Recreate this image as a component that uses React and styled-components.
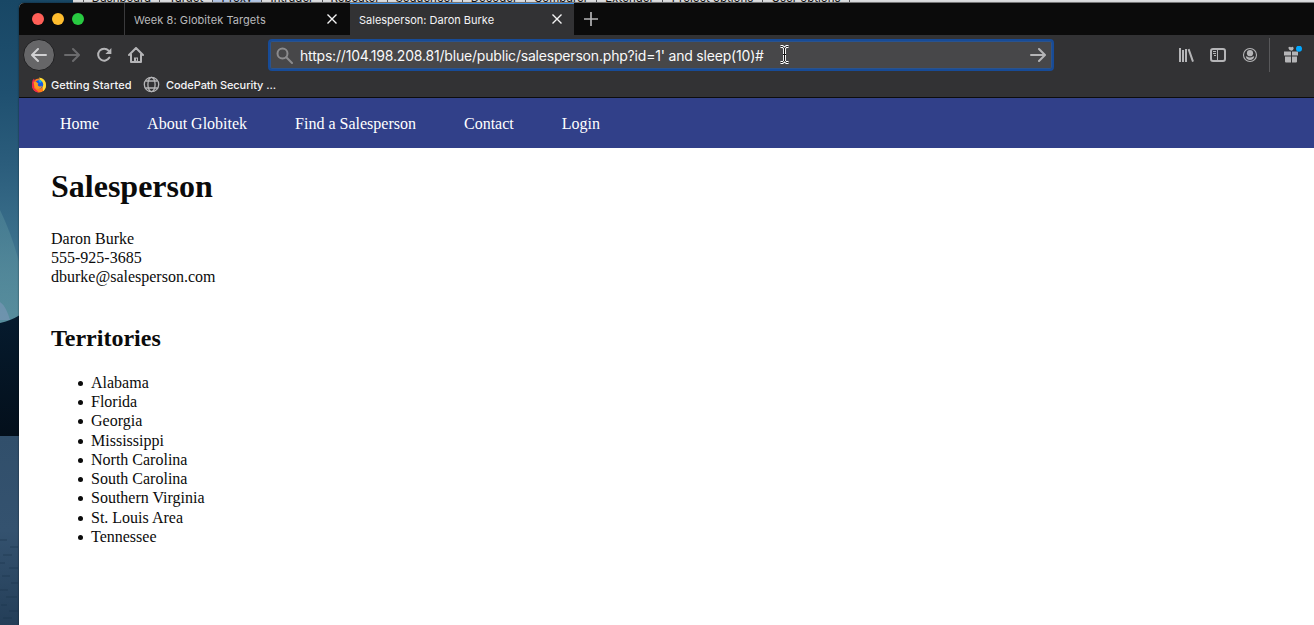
import React from 'react';
import styled, { createGlobalStyle } from 'styled-components';

const GlobalStyle = createGlobalStyle`
  * { box-sizing: border-box; }
  body { margin: 0; overflow: hidden; }
`;

const Desktop = styled.div`
  position: relative;
  width: 1314px;
  height: 625px;
  overflow: hidden;
  background: #1c4764;
  display: flex;
  flex-direction: column;
  isolation: isolate;
`;

const Wallpaper = styled.svg`
  position: absolute;
  left: 0;
  top: 0;
  z-index: -1;
`;

const BackWindow = styled.div`
  margin-left: 73px;
  height: 3px;
  flex: none;
  overflow: hidden;
  display: flex;
  padding-left: 10px;
  background: #dcdddf;
  border-bottom: 1px solid #8b8b8d;
`;

const BackTab = styled.div`
  flex: none;
  width: ${(p) => p.$width}px;
  height: 2px;
  border-left: 1px solid #55565a;
  background: ${(p) => (p.$active ? '#b3c6e4' : 'transparent')};
  color: #111;
  text-align: center;
  white-space: nowrap;
  font: 11.5px/14px Inter, 'Liberation Sans', sans-serif;

  span {
    display: block;
    margin-top: -9px;
  }
`;

const Window = styled.div`
  flex: 1;
  margin-left: 19px;
  display: flex;
  flex-direction: column;
  border-top-left-radius: 5px;
  overflow: hidden;
  background: #fff;
  box-shadow: 0 0 2px rgba(0, 0, 0, 0.6);
`;

const TabStrip = styled.div`
  flex: none;
  height: 32px;
  display: flex;
  background: #0b0b0b;
`;

const TrafficLights = styled.div`
  width: 105px;
  padding: 0 0 1px 13px;
  display: flex;
  align-items: center;
  gap: 8px;
`;

const Light = styled.span`
  width: 12px;
  height: 12px;
  border-radius: 50%;
  background: ${(p) => p.$color};
`;

const Tab = styled.div`
  width: ${(p) => p.$width}px;
  display: flex;
  align-items: center;
  justify-content: space-between;
  padding: 0 ${(p) => (p.$active ? 11 : 12)}px 0 9px;
  border-left: ${(p) => (p.$active ? 'none' : '1px solid #3a3a3c')};
  background: ${(p) => (p.$active ? '#323234' : 'transparent')};
  color: ${(p) => (p.$active ? '#f4f4f6' : '#b9b9bb')};
  box-shadow: ${(p) => (p.$active ? 'inset 0 1px #3b93ee' : 'none')};
  font: 11px/16px Inter, 'Liberation Sans', sans-serif;
  white-space: nowrap;
`;

const TabTitle = styled.span`
  letter-spacing: ${(p) => p.$track}px;
  padding-top: 1px;
`;

const Icon = styled.svg`
  flex: none;
  display: block;
  fill: none;
  stroke: ${(p) => p.$color || '#b5b5b7'};
  stroke-width: ${(p) => p.$weight || 2};
`;

const NewTab = styled.div`
  padding: 9px 10px;
`;

const Toolbar = styled.div`
  flex: none;
  height: 40px;
  display: flex;
  align-items: center;
  background: #323234;
`;

const NavButtons = styled.div`
  width: 249px;
  padding-left: 4px;
  display: flex;
  align-items: center;
`;

const BackButton = styled.div`
  width: 32px;
  height: 32px;
  margin-right: 9px;
  border-radius: 50%;
  border: 1px solid #1f1f21;
  background: #666668;
  display: grid;
  place-items: center;
`;

const NavIcon = styled.div`
  width: 16px;
  margin-right: 16px;
`;

const UrlBar = styled.div`
  width: 786px;
  height: 32px;
  padding: 0 6px 0 6px;
  display: flex;
  align-items: center;
  border: 2px solid #174b97;
  border-radius: 4px;
  background: #474749;
  box-shadow: inset 0 0 0 1px #29538e;
`;

const UrlText = styled.span`
  margin-left: 7px;
  padding-top: 1px;
  flex: 1;
  color: #f9f9fa;
  font: 14px/20px Inter, 'Liberation Sans', sans-serif;
  letter-spacing: -0.19px;
  white-space: nowrap;
`;

const TextCursor = styled.svg`
  position: absolute;
  left: 779px;
  top: 45px;
`;

const ToolIcons = styled.div`
  margin-left: auto;
  height: 34px;
  display: flex;
  align-items: center;
  gap: 16px;
`;

const Gift = styled.div`
  width: 45px;
  height: 34px;
  margin-left: -5px;
  padding: 8px 0 0 13px;
  border-left: 1px solid #58585a;
`;

const Bookmarks = styled.div`
  flex: none;
  height: 23px;
  display: flex;
  align-items: center;
  padding: 0 0 3px 12px;
  border-bottom: 1px solid #0c0c0d;
  background: #323234;
`;

const Bookmark = styled.div`
  display: flex;
  align-items: center;
  gap: ${(p) => p.$gap}px;
  width: ${(p) => p.$width}px;
  color: #f5f5f7;
  font: 500 11px/16px Inter, 'Liberation Sans', sans-serif;
  letter-spacing: ${(p) => p.$track}px;
  white-space: nowrap;
`;

const SiteNav = styled.nav`
  flex: none;
  height: 50px;
  padding: 2px 0 0 41px;
  display: flex;
  align-items: center;
  gap: 48px;
  background: #314089;
  color: #fff;
  font: 16px/18px 'Liberation Serif', serif;
`;

const Page = styled.main`
  flex: 1;
  padding: 0 32px;
  background: #fff;
  color: #0b0b0b;
  font: 16px/19.25px 'Liberation Serif', serif;
`;

const Heading = styled.h1`
  margin: 20px 0 23.5px;
  font-size: 32px;
  line-height: 37px;
`;

const Subheading = styled.h2`
  margin: 37.5px 0 21px;
  font-size: 24px;
  line-height: 28px;
`;

const Contact = styled.p`
  margin: 0;
`;

const TerritoryList = styled.ul`
  margin: 0;
  padding-left: 27px;
  list-style: none;
`;

const Territory = styled.li`
  display: flex;
  align-items: center;
  gap: 8px;

  &::before {
    content: '';
    width: 5px;
    height: 5px;
    margin-top: 2px;
    border-radius: 50%;
    background: #0b0b0b;
  }
`;

const backTabs = [
  ['Dashboard', 76],
  ['Target', 53],
  ['Proxy', 49, true],
  ['Intruder', 61],
  ['Repeater', 65],
  ['Sequencer', 75],
  ['Decoder', 63],
  ['Comparer', 71],
  ['Extender', 66],
  ['Project options', 100],
  ['User options', 87],
  ['', 2],
];

const territories = [
  'Alabama',
  'Florida',
  'Georgia',
  'Mississippi',
  'North Carolina',
  'South Carolina',
  'Southern Virginia',
  'St. Louis Area',
  'Tennessee',
];

const CloseIcon = () => (
  <Icon width="12" height="12" viewBox="0 0 12 12" $color="#f4f4f5" $weight="1.4">
    <path d="M1.5 1.5l9 9M10.5 1.5l-9 9" />
  </Icon>
);

const Landscape = () => (
  <Wallpaper width="80" height="625" viewBox="0 0 80 625">
    <defs>
      <linearGradient id="sky" x1="0" y1="0" x2="0" y2="1">
        <stop offset="0" stopColor="#184765" />
        <stop offset="0.28" stopColor="#1f5070" />
        <stop offset="0.5" stopColor="#2b5d7c" />
        <stop offset="0.72" stopColor="#3a6f8b" />
        <stop offset="1" stopColor="#5d93a4" />
      </linearGradient>
      <linearGradient id="glow" x1="0" y1="0" x2="0" y2="1">
        <stop offset="0" stopColor="#568c9b" stopOpacity="0.5" />
        <stop offset="1" stopColor="#568c9b" stopOpacity="0.8" />
      </linearGradient>
      <linearGradient id="hill" x1="0" y1="0" x2="0" y2="1">
        <stop offset="0" stopColor="#061b2e" />
        <stop offset="1" stopColor="#030f1b" />
      </linearGradient>
      <linearGradient id="lake" x1="0" y1="0" x2="0" y2="1">
        <stop offset="0" stopColor="#314f6b" />
        <stop offset="0.5" stopColor="#34526f" />
        <stop offset="1" stopColor="#243e58" />
      </linearGradient>
    </defs>
    <rect width="80" height="330" fill="url(#sky)" />
    <path d="M0 210Q12 235 19 262V330H0Z" fill="url(#glow)" />
    <path d="M0 302Q6 306 10 320H0Z" fill="#7795b5" opacity="0.7" />
    <path d="M0 323Q10 321 20 315V437H0Z" fill="url(#hill)" />
    <rect y="436" width="80" height="189" fill="url(#lake)" />
    <path
      d="M0 540h7M10 547h8M3 555h9M0 563h5M9 568h9M2 576h8M11 583h7M0 590h8M6 597h11M1 605h6M9 611h9M3 618h9"
      stroke="#1b344c"
      opacity="0.6"
    />
  </Wallpaper>
);

export default function App() {
  return (
    <Desktop>
      <GlobalStyle />
      <Landscape />
      <BackWindow>
        {backTabs.map(([name, width, active]) => (
          <BackTab key={name} $width={width} $active={active}>
            <span>{name}</span>
          </BackTab>
        ))}
      </BackWindow>
      <Window>
        <TabStrip>
          <TrafficLights>
            <Light $color="#ff5f57" />
            <Light $color="#ffbd2e" />
            <Light $color="#28ca41" />
          </TrafficLights>
          <Tab $width={226}>
            <TabTitle $track={0.07}>Week 8: Globitek Targets</TabTitle>
            <CloseIcon />
          </Tab>
          <Tab $width={224} $active>
            <TabTitle $track={0}>Salesperson: Daron Burke</TabTitle>
            <CloseIcon />
          </Tab>
          <NewTab>
            <Icon width="14" height="14" viewBox="0 0 14 14" $weight="1.7">
              <path d="M7 0v14M0 7h14" />
            </Icon>
          </NewTab>
        </TabStrip>
        <Toolbar>
          <NavButtons>
            <BackButton>
              <Icon width="16" height="16" viewBox="0 0 16 16" $color="#d0d0d2" strokeLinecap="round" strokeLinejoin="round">
                <path d="M15 8H1.5M7 2L1 8l6 6" />
              </Icon>
            </BackButton>
            <NavIcon>
              <Icon width="16" height="16" viewBox="0 0 16 16" $color="#6b6b6d" strokeLinecap="round" strokeLinejoin="round">
                <path d="M1 8h13.5M9 2l6 6-6 6" />
              </Icon>
            </NavIcon>
            <NavIcon>
              <Icon width="16" height="16" viewBox="0 0 16 16" strokeLinecap="round">
                <path d="M12.6 3.6A6 6 0 1 0 13.4 10.6" />
                <path d="M15.4 1v6h-6z" fill="#b5b5b7" stroke="none" />
              </Icon>
            </NavIcon>
            <NavIcon>
              <Icon width="16" height="16" viewBox="0 0 16 16" strokeLinecap="round" strokeLinejoin="round">
                <path d="M1 8l7-7 7 7M3 7.5V15h10V7.5" />
                <path d="M6 15v-4.5h4V15z" fill="#b5b5b7" stroke="none" />
                <path d="M8.5 12v1.2" stroke="#323234" strokeWidth="1" />
              </Icon>
            </NavIcon>
          </NavButtons>
          <UrlBar>
            <Icon width="17" height="17" viewBox="0 0 17 17" $color="#8b8b8d" strokeLinecap="round">
              <circle cx="6.5" cy="6.5" r="5" />
              <path d="M10.3 10.3L16 16" />
            </Icon>
            <UrlText>https://104.198.208.81/blue/public/salesperson.php?id=1' and sleep(10)#</UrlText>
            <Icon width="16" height="16" viewBox="0 0 16 16" strokeLinecap="round" strokeLinejoin="round">
              <path d="M1 8h13.5M9 2l6 6-6 6" />
            </Icon>
          </UrlBar>
          <ToolIcons>
            <Icon width="16" height="16" viewBox="0 0 16 16">
              <path d="M2 1v14M5 3v12M8 2v13M10.6 2.2L15 14.7" />
            </Icon>
            <Icon width="16" height="16" viewBox="0 0 16 16">
              <rect x="1" y="2" width="14" height="12" rx="2" />
              <path d="M7.5 2v12" strokeWidth="1" />
              <path d="M3 4.5h3M3 6.5h3M4 8.5h2" strokeWidth="1" />
            </Icon>
            <Icon width="16" height="16" viewBox="0 0 16 16">
              <circle cx="8" cy="8" r="6.5" strokeWidth="1.1" />
              <circle cx="8" cy="6.2" r="3.1" fill="#b5b5b7" stroke="none" />
              <path d="M3.8 9.2L5 9.5Q8 11.4 11 9.5l1.2-.3Q11.6 13 8 13T3.8 9.2z" fill="#b5b5b7" stroke="none" />
            </Icon>
            <Gift>
              <Icon width="20" height="18" viewBox="0 0 20 18">
                <g fill="#b5b5b7" stroke="none">
                  <path d="M1 5.5H8v4H1zM9 5.5h6v4H9zM2 10.5h6v6H3q-1 0-1-1zM9 10.5h5v5q0 1-1 1H9z" />
                  <path d="M5.2 1.8Q7-.2 8 1.4 9.8 0 10.7 2.2L10 4 8.5 4.8 6.5 4z" />
                </g>
                <circle cx="16" cy="2.7" r="3" fill="#00a7ff" stroke="none" />
              </Icon>
            </Gift>
          </ToolIcons>
        </Toolbar>
        <Bookmarks>
          <Bookmark $gap={4} $width={112} $track={0.07}>
            <Icon width="16" height="16" viewBox="0 0 16 16">
              <g stroke="none">
                <circle cx="8" cy="8.5" r="7" fill="#ff7a19" />
                <path d="M1 6Q1 3 3 1.5L4 4l-1 7 5 4.5A7 7 0 0 1 1 8z" fill="#f0244c" />
                <path d="M8 .5Q14.7 1 15 8q0 4-3 6.2Q12 7 8 .5z" fill="#ffdc35" />
                <circle cx="8" cy="7.5" r="4.2" fill="#165be0" />
                <path d="M7 2.6q3 .2 4 2L9 6z" fill="#13b5ee" />
                <path d="M2.5 4.5Q5.2 4 7.5 6.7 5.8 8 8 9.3q1.6.6 3-.5-1 3.5-4.2 3.3Q3 11.5 2.5 4.5z" fill="#ff9820" />
              </g>
            </Icon>
            Getting Started
          </Bookmark>
          <Bookmark $gap={6} $width={140} $track={-0.07}>
            <Icon width="17" height="17" viewBox="0 0 17 17" $weight="1.3">
              <circle cx="8.5" cy="8.5" r="7.2" />
              <ellipse cx="8.5" cy="8.5" rx="3.6" ry="7.2" />
              <path d="M2.5 5h12M2.5 12h12" />
            </Icon>
            CodePath Security ...
          </Bookmark>
        </Bookmarks>
        <SiteNav>
          <span>Home</span>
          <span>About Globitek</span>
          <span>Find a Salesperson</span>
          <span>Contact</span>
          <span>Login</span>
        </SiteNav>
        <Page>
          <Heading>Salesperson</Heading>
          <Contact>
            Daron Burke
            <br />
            555-925-3685
            <br />
            dburke@salesperson.com
          </Contact>
          <Subheading>Territories</Subheading>
          <TerritoryList>
            {territories.map((name) => (
              <Territory key={name}>{name}</Territory>
            ))}
          </TerritoryList>
        </Page>
      </Window>
      <TextCursor width="11" height="19" viewBox="0 0 11 19" fill="none">
        <path d="M1.5 1.5h2l2 1.5 2-1.5h2M5.5 3v13M1.5 17.5h2l2-1.5 2 1.5h2M4 9.5h3" stroke="#fff" strokeWidth="2.8" />
        <path d="M1.5 1.5h2l2 1.5 2-1.5h2M5.5 3v13M1.5 17.5h2l2-1.5 2 1.5h2M4 9.5h3" stroke="#111" strokeWidth="1" />
      </TextCursor>
    </Desktop>
  );
}
